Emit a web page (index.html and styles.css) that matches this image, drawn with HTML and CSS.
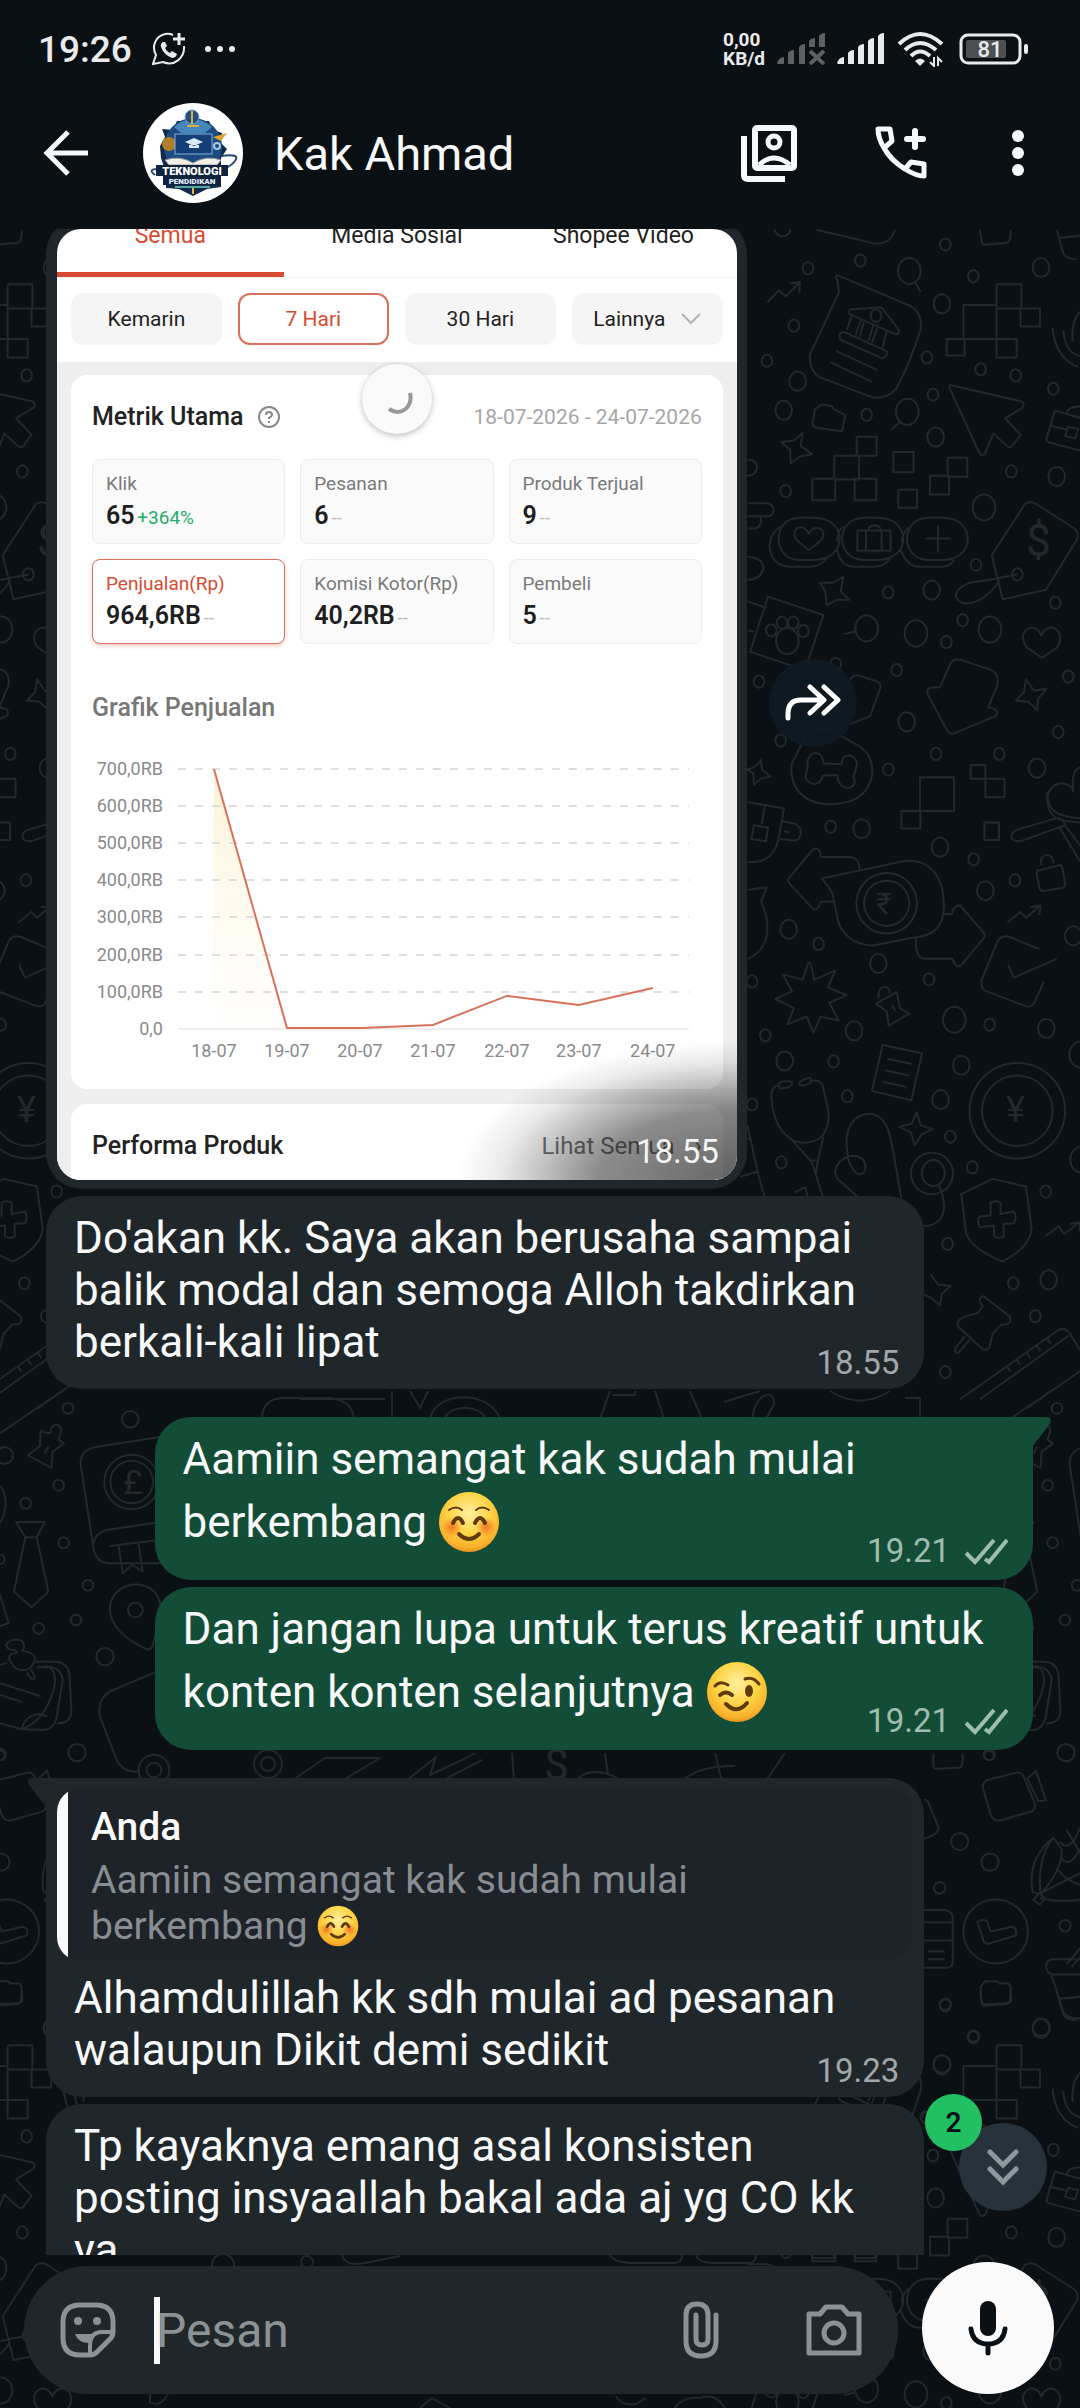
FILE: index.html
```html
<!DOCTYPE html>
<html lang="id">
<head>
    <meta charset="UTF-8">
    <meta name="viewport" content="width=device-width, initial-scale=1.0">
    <title>Kak Ahmad</title>
    <link rel="stylesheet" href="styles.css">
</head>
<body>

<!-- Shared shapes -->
<svg class="sprite" aria-hidden="true">
    <defs>
        <radialGradient id="face" cx="50%" cy="35%" r="68%">
            <stop offset="0" stop-color="#fff0a0"/>
            <stop offset="0.5" stop-color="#fdd545"/>
            <stop offset="0.85" stop-color="#f8b02a"/>
            <stop offset="1" stop-color="#e58a1c"/>
        </radialGradient>
        <radialGradient id="blush">
            <stop offset="0" stop-color="#f4641c" stop-opacity="0.85"/>
            <stop offset="1" stop-color="#f4641c" stop-opacity="0"/>
        </radialGradient>
    </defs>
    <symbol id="emoji-smile" viewBox="0 0 62 62">
        <circle cx="31" cy="31" r="30" fill="url(#face)"/>
        <circle cx="14" cy="36" r="10" fill="url(#blush)"/>
        <circle cx="48" cy="36" r="10" fill="url(#blush)"/>
        <g fill="none" stroke="#5f3a0c" stroke-linecap="round">
            <path d="M11 19Q18 14 24 19M38 19Q44 14 51 19" stroke-width="2"/>
            <path d="M15 32Q20 22 25 32M37 32Q42 22 47 32" stroke-width="4"/>
            <path d="M21 43Q31 53 41 43" stroke-width="4"/>
        </g>
    </symbol>
    <symbol id="emoji-wink" viewBox="0 0 62 62">
        <circle cx="31" cy="31" r="30" fill="url(#face)"/>
        <ellipse cx="43" cy="30" rx="4" ry="6" fill="#5f3a0c"/>
        <g fill="none" stroke="#5f3a0c" stroke-linecap="round">
            <path d="M9 25Q14 19 22 24M39 18Q47 15 53 23" stroke-width="3"/>
            <path d="M14 34Q20 29 26 34" stroke-width="4"/>
            <path d="M20 43Q31 54 41 42" stroke-width="4"/>
        </g>
    </symbol>
    <symbol id="ticks" viewBox="0 0 44 28">
        <path d="M2 16L11 25L30 3M21 22L25 25L43 3" fill="none" stroke="currentColor" stroke-width="4"/>
    </symbol>
</svg>

<div class="app">

    <!-- Wallpaper -->
    <svg class="wallpaper" aria-hidden="true">
        <g id="tile">
            <g transform="translate(740 230) scale(.3333 .3827)">
                <path d="M230 0Q310 15 400 35Q450 40 465 0M720 0L725 30Q727 40 740 38L800 34Q813 32 812 0M950 0L968 55Q975 78 1010 76M960 20L1030 14"/>
                <path d="M82 188L117 158L137 174L178 138M148 140L180 136L178 164M524 134L542 162M484 498L454 522M348 1048L312 1056"/>
                <path d="M292 118L510 198Q548 215 542 260Q510 350 468 415Q445 440 400 438L240 385Q205 365 210 325L296 165Q296 140 288 122Z"/>
                <path d="M330 208Q320 218 335 222L465 272Q480 274 476 260L425 202ZM300 270Q295 285 305 288L425 335Q440 336 442 318L312 266ZM335 225L320 262M362 235L347 275M372 240L358 280M400 250L385 290M412 255L396 294M440 264L426 312M288 316L412 366M272 346L395 396"/>
                <path d="M770 142H844V205H900V252H842V205M770 142V285H830V333H770V285M620 285H674V328H620ZM670 285V196H770V205H842M674 285H770"/>
                <path d="M630 405L845 448Q856 455 848 464L795 492L842 535L815 566Q808 570 800 564L760 532L735 585Q725 592 718 582L628 412Z"/>
                <path d="M225 468L245 456L275 460L282 468L316 484L306 526L225 516Q214 510 220 494ZM188 530L182 564L216 586L180 592L152 610L150 574L124 554L162 550Z"/>
                <path d="M350 540H410V590H350ZM283 590H357V652H283ZM217 650H286V706H217ZM344 650H409V706H344ZM460 580H521V633H460ZM475 679H531V726H475ZM623 595H682V645H623ZM570 642H627V691H570Z"/>
                <path d="M938 255Q945 335 1015 358M970 262Q975 320 1020 330M1060 195Q990 210 998 290M945 472L1060 500M945 472L920 545Q918 552 928 555L1080 590M935 512L980 522M985 514L1015 520L1005 545L975 538ZM980 480Q985 458 1030 462"/>
                <path d="M178 752H222C325 752 325 862 222 862H178C95 862 95 752 178 752M122 775C70 800 80 880 150 880H205Q245 880 262 855M372 752H414C515 752 515 862 414 862H372C285 862 285 752 372 752M312 775Q290 785 292 815M292 835Q300 880 345 880H400Q435 880 452 855M565 752H610C708 752 708 862 610 862H565C480 862 480 752 565 752M505 778Q485 795 486 815M482 835Q500 880 540 880H600Q630 880 642 862"/>
                <path d="M206 837L170 810C145 775 195 765 206 794C220 765 270 780 242 812ZM352 785H452V838H352ZM378 785V838M425 785V838M385 785Q385 772 404 772Q422 772 422 785M594 772V840M556 806H632"/>
                <path d="M22 714H80Q102 716 100 735Q98 748 80 748H22M22 780H45Q65 778 63 750M22 600Q50 600 52 620Q48 642 22 642M22 854Q72 858 70 884Q62 914 22 914"/>
                <path d="M855 716Q870 708 885 714L1000 778Q1020 790 1010 810L918 940L788 965L755 850ZM832 900C790 905 765 915 700 920C640 930 630 972 680 976C730 975 770 930 778 915"/>
                <path d="M310 906L302 944L328 966L290 966L260 980L256 944L240 922L278 922ZM84 958L250 1006L195 1150L30 1102ZM22 970L80 988M22 1046L42 1050"/>
                <path d="M22 1410Q60 1400 62 1384L66 1410L92 1428L62 1434L42 1450L40 1420ZM906 1118L860 1090C825 1050 885 1015 904 1060C925 1015 985 1050 950 1092ZM858 1174L882 1204L920 1198L894 1226L892 1254L864 1232L828 1230L852 1208Z"/>
                <path d="M600 1195L630 1135Q640 1118 665 1124L755 1150Q778 1160 772 1190L745 1248Q780 1250 768 1270L645 1314Q630 1320 622 1308L562 1212Q560 1196 575 1196Z"/>
                <path d="M330 1175Q340 1160 360 1165L412 1180Q425 1185 420 1200L390 1270L330 1292M205 1310L155 1395C145 1500 260 1510 320 1495C400 1480 425 1390 360 1350L270 1305Q235 1300 205 1310"/>
                <path d="M250 1394L305 1396C305 1360 355 1370 350 1400C345 1425 335 1425 345 1440C340 1470 290 1460 292 1424L248 1426C240 1460 190 1450 198 1420C200 1410 205 1410 202 1395C205 1355 250 1360 250 1394Z"/>
                <path d="M540 1430H642V1518H540ZM484 1518H541V1564H484ZM692 1398H736V1434H692ZM736 1434H794V1482H736ZM733 1548H777V1594H733ZM1000 1470C1000 1440 925 1430 922 1490C925 1540 960 1545 1020 1548M1030 1400Q990 1410 1000 1460"/>
                <circle class="ring-l" cx="508" cy="107"/><circle class="ring-l" cx="502" cy="475"/><circle class="ring-l" cx="732" cy="725"/><circle class="ring-l" cx="380" cy="1041"/><circle class="ring-l" cx="528" cy="1054"/><circle class="ring-l" cx="750" cy="1044"/><circle class="ring-l" cx="142" cy="1074"/>
                <circle class="ring-m" cx="606" cy="193"/><circle class="ring-m" cx="903" cy="98"/><circle class="ring-m" cx="173" cy="395"/><circle class="ring-m" cx="131" cy="471"/><circle class="ring-m" cx="587" cy="541"/><circle class="ring-m" cx="950" cy="644"/><circle class="ring-m" cx="575" cy="941"/><circle class="ring-m" cx="500" cy="1285"/><circle class="ring-m" cx="891" cy="1406"/><circle class="ring-m" cx="128" cy="-8"/>
                <circle class="ring-s" cx="616" cy="38"/><circle class="ring-s" cx="361" cy="80"/><circle class="ring-s" cx="204" cy="100"/><circle class="ring-s" cx="700" cy="121"/><circle class="ring-s" cx="162" cy="250"/><circle class="ring-s" cx="81" cy="342"/><circle class="ring-s" cx="561" cy="333"/><circle class="ring-s" cx="722" cy="364"/><circle class="ring-s" cx="827" cy="380"/><circle class="ring-s" cx="940" cy="415"/><circle class="ring-s" cx="579" cy="430"/><circle class="ring-s" cx="380" cy="483"/><circle class="ring-s" cx="814" cy="631"/><circle class="ring-s" cx="137" cy="682"/><circle class="ring-s" cx="708" cy="875"/><circle class="ring-s" cx="445" cy="947"/><circle class="ring-s" cx="946" cy="974"/><circle class="ring-s" cx="668" cy="1020"/><circle class="ring-s" cx="619" cy="1077"/><circle class="ring-s" cx="287" cy="1134"/><circle class="ring-s" cx="470" cy="1150"/><circle class="ring-s" cx="57" cy="1180"/><circle class="ring-s" cx="985" cy="1167"/><circle class="ring-s" cx="122" cy="1334"/><circle class="ring-s" cx="955" cy="1312"/><circle class="ring-s" cx="588" cy="1369"/><circle class="ring-s" cx="778" cy="1369"/><circle class="ring-s" cx="445" cy="1410"/><circle class="ring-s" cx="408" cy="224"/><circle class="ring-s" cx="832" cy="900"/>
                <circle class="ring-s" cx="94" cy="1046"/><circle class="ring-s" cx="126" cy="1026"/><circle class="ring-s" cx="160" cy="1026"/><circle class="ring-s" cx="190" cy="1048"/>
            </g>
            <g transform="translate(740 800) scale(.3333 .3827)">
                <path d="M22 5L132 22L118 90Q105 162 40 162H22M75 14L65 62M42 66L84 72L78 108L34 102ZM126 55L165 62C192 75 185 108 160 106L116 102M132 82L150 84"/>
                <path d="M358 182Q360 150 325 149H242L240 135Q230 122 218 130L146 205Q142 212 148 218L218 284Q235 292 242 266H280M245 205L490 160C570 150 612 200 612 280C610 330 580 355 530 358L400 380C340 380 300 350 290 300L278 245Q265 225 245 205M612 298H636Q640 275 660 275L734 350Q736 358 728 364L665 430Q650 445 638 415H560Q530 415 528 380V358"/>
                <path d="M22 235L80 228L64 265C95 330 90 390 22 416M206 424Q214 422 222 470L286 446L264 490L320 510L268 530L296 576L242 566L220 608L200 566L142 586L162 544L106 520L156 500L128 455L188 470Z"/>
                <path d="M815 92Q810 108 840 108L975 66Q970 42 940 50L830 78Q818 82 815 92M920 -20C925 30 950 45 1030 48M960 74L1020 160M975 66L1030 130M905 170L902 160C910 135 940 140 940 166M892 185L960 170Q966 170 968 180L975 218Q975 228 965 230L910 238Q900 238 898 228L890 195ZM802 320L842 292L858 308L900 276M870 280L902 276L898 300"/>
                <path d="M898 390L810 358Q780 350 770 375L725 470Q720 490 735 498L855 538Q880 545 888 520L912 475M804 430L822 464L950 415M415 518C415 475 450 485 450 505M408 532L470 502L480 544L508 558L446 590L440 552ZM456 535L466 552"/>
                <path d="M428 640L546 662L514 785L396 760ZM442 676L514 690M434 706L508 720M428 736L500 750"/>
                <path d="M115 744Q120 732 155 736Q162 752 120 754ZM178 744Q175 732 210 726Q225 740 190 746ZM118 744Q90 750 95 780Q100 860 160 890Q205 905 245 880Q275 845 262 800L248 745Q240 730 215 734M155 888L215 945L250 1040M250 880L232 950L228 975M208 942H236M355 1038L292 990Q275 970 300 945C330 920 380 925 376 965C360 1000 325 960 322 920C310 860 340 820 390 820C445 825 450 880 460 920L484 1040M595 1005C630 1070 610 1110 552 1114"/>
                <path d="M530 816L542 850L578 860L545 874L525 902L512 868L478 854L515 846ZM758 990L858 1010L875 1120Q870 1170 786 1206Q690 1170 678 1130L664 1030ZM752 1052Q770 1045 782 1052V1082L822 1075Q832 1090 822 1106L790 1108L792 1140Q775 1148 762 1140V1112L720 1116Q708 1100 720 1088L752 1086Z"/>
                <path d="M916 1140L956 1114L972 1134L1018 1104M990 1108L1020 1104L1018 1126M22 850L55 980L75 1040M0 985L55 970M22 885H35M165 1025L195 1012L205 1040M572 1240L594 1266L632 1270L606 1290L600 1320L572 1300L552 1292"/>
                <path d="M730 1296L810 1350Q815 1375 785 1370L758 1395L748 1432Q735 1442 722 1430L656 1378Q645 1360 675 1350L715 1340L728 1322Q710 1305 730 1296M690 1410L655 1445Q640 1445 648 1430L675 1400M660 1566L955 1385Q975 1375 990 1395L1080 1520M720 1566L985 1400M860 1590L1040 1480M800 1480L812 1494M830 1462L842 1476M860 1444L872 1458M890 1426L902 1440M920 1406L932 1420"/>
                <ellipse cx="440" cy="270" rx="91" ry="79"/><ellipse cx="440" cy="270" rx="68" ry="59"/><ellipse cx="832" cy="812" rx="143" ry="125"/><ellipse cx="832" cy="812" rx="106" ry="92"/><ellipse cx="576" cy="976" rx="63" ry="54"/>
                <circle class="ring-l" cx="643" cy="574"/><circle class="ring-l" cx="580" cy="975"/><circle class="ring-l" cx="1022" cy="665"/><circle class="ring-l" cx="1025" cy="940"/>
                <circle class="ring-m" cx="365" cy="75"/><circle class="ring-m" cx="600" cy="123"/><circle class="ring-m" cx="736" cy="237"/><circle class="ring-m" cx="146" cy="338"/><circle class="ring-m" cx="415" cy="427"/><circle class="ring-m" cx="342" cy="603"/><circle class="ring-m" cx="134" cy="682"/><circle class="ring-m" cx="664" cy="693"/><circle class="ring-m" cx="602" cy="783"/><circle class="ring-m" cx="919" cy="597"/><circle class="ring-m" cx="1000" cy="355"/><circle class="ring-m" cx="926" cy="1254"/>
                <circle class="ring-s" cx="272" cy="70"/><circle class="ring-s" cx="701" cy="155"/><circle class="ring-s" cx="825" cy="210"/><circle class="ring-s" cx="236" cy="376"/><circle class="ring-s" cx="567" cy="469"/><circle class="ring-s" cx="36" cy="474"/><circle class="ring-s" cx="76" cy="615"/><circle class="ring-s" cx="749" cy="587"/><circle class="ring-s" cx="281" cy="683"/><circle class="ring-s" cx="322" cy="774"/><circle class="ring-s" cx="36" cy="796"/><circle class="ring-s" cx="631" cy="880"/><circle class="ring-s" cx="124" cy="947"/><circle class="ring-s" cx="697" cy="960"/><circle class="ring-s" cx="917" cy="1023"/><circle class="ring-s" cx="623" cy="1160"/><circle class="ring-s" cx="820" cy="1263"/><circle class="ring-s" cx="886" cy="1349"/><circle class="ring-s" cx="616" cy="1495"/>
            </g>
            <g transform="translate(920 1390) scale(.3333 .4783)">
                <path d="M40 760V785Q42 794 52 792L118 790Q130 788 128 760M190 835Q185 820 205 815L290 800Q305 798 312 810L345 865Q348 878 330 882L240 900Q220 902 212 888ZM322 812L348 796L378 858L355 860Z"/>
                <path d="M12 856Q22 855 28 868L56 915Q55 930 12 938M12 1087H75Q98 1090 98 1105V1195Q98 1208 80 1208H12M12 1113H98M12 1151H98M24 1174H74M24 1190H74M400 936Q320 980 338 1050L362 1054Q430 1000 425 960ZM362 1054Q350 980 400 936M370 1050Q420 1030 480 1010M340 1066L358 1052L375 1062L360 1076ZM410 1000Q450 1040 540 1040M360 1062Q430 1075 540 1060M420 945Q450 970 480 915M440 920L500 990M425 980Q450 1000 480 960"/>
                <path d="M172 1112Q185 1105 200 1110L212 1132L275 1122Q292 1124 288 1140L205 1158Q190 1158 188 1145ZM182 1248L195 1236H232L236 1241H265Q272 1244 272 1252L274 1275Q272 1282 262 1282L195 1284Q184 1284 184 1276ZM378 1205Q380 1190 400 1190H500M378 1205Q380 1220 400 1222H500M395 1224L430 1300Q440 1315 480 1314M420 1272L500 1268M440 1200L490 1160M455 1206L510 1165"/>
                <ellipse cx="227" cy="1132" rx="97" ry="67"/>
                <ellipse cx="119" cy="944" rx="26" ry="18"/><ellipse cx="210" cy="987" rx="26" ry="18"/><ellipse cx="364" cy="1332" rx="26" ry="18"/><ellipse cx="66" cy="1409" rx="26" ry="18"/>
                <ellipse cx="59" cy="1041" rx="17" ry="12"/><ellipse cx="435" cy="1120" rx="17" ry="12"/><ellipse cx="76" cy="1284" rx="17" ry="12"/><ellipse cx="161" cy="1351" rx="17" ry="12"/><ellipse cx="208" cy="762" rx="17" ry="12"/><ellipse cx="18" cy="1520" rx="17" ry="12"/>
            </g>
            <g transform="translate(989 1380) scale(.3333)">
                <path d="M0 160L190 30M122 152Q135 162 152 158C150 130 185 125 184 155L175 178L192 190L158 215L154 264L84 226L120 198ZM146 200L134 220M48 426H134L110 472H76ZM76 472L42 635L95 682L145 635L110 472M0 318Q20 340 16 385Q12 410 0 430M0 645L26 730L0 738"/>
                <path d="M520 165L290 200Q238 210 242 255L280 500Q285 550 330 550H520M520 420L335 448Q290 452 280 490M520 475L328 498M356 496L368 580L396 555L428 574L416 492M440 808Q455 812 460 790L482 690C485 590 340 590 330 680C325 740 380 780 440 808M470 875L340 930Q290 950 300 1010L350 1140Q370 1180 420 1174M0 910L120 948M0 945L66 966M0 1030L65 1048Q120 1030 150 960Q180 890 150 862L110 862M20 848L0 855M65 1048Q75 1005 120 1002L140 1008M70 1048L130 1050Q165 1050 172 1000L188 900Q185 860 130 858M172 1030Q215 1030 214 990L208 880Q200 845 165 845H105M35 850Q20 830 35 822L52 818L44 810C0 810 20 770 60 780C80 790 70 810 66 812L80 815Q115 825 100 850C90 875 50 880 35 850ZM80 878L95 898Q108 898 102 885L92 868"/>
                <circle cx="395" cy="306" r="82"/><circle cx="395" cy="306" r="64"/><circle cx="406" cy="690" r="22"/><circle cx="462" cy="1170" r="46"/><circle cx="462" cy="1170" r="22"/>
                <circle cx="391" cy="118" r="25"/><circle cx="14" cy="227" r="25"/><circle cx="315" cy="830" r="26"/><circle cx="231" cy="1118" r="26"/>
                <circle cx="204" cy="85" r="16"/><circle cx="176" cy="316" r="16"/><circle cx="77" cy="370" r="16"/><circle cx="191" cy="488" r="16"/><circle cx="264" cy="616" r="16"/><circle cx="228" cy="720" r="16"/><circle cx="116" cy="745" r="16"/><circle cx="0" cy="538" r="14"/><circle cx="0" cy="1126" r="14"/>
            </g>
            <text x="1026" y="556" font-size="44">$</text>
            <text x="876" y="914" font-size="30">₹</text>
            <text x="1006" y="1122" font-size="36">¥</text>
            <text x="1112" y="1494" font-size="34">£</text>
        </g>
        <use href="#tile" x="-989"/>
        <use href="#tile" y="1761"/>
        <use href="#tile" x="-989" y="1761"/>
        <!-- pieces that show in the gaps between bubbles -->
        <path d="M262 1419Q262 1398 285 1398H330Q352 1400 354 1419M300 1399H385M392 1391V1419M410 1391L420 1408L428 1391M430 1419C436 1390 490 1390 500 1419M444 1419C450 1404 480 1404 486 1419M610 1391L600 1419M612 1395H635V1391M655 1391L664 1419M690 1391L702 1419M724 1402L760 1391M752 1419C756 1390 776 1390 774 1404L766 1419M830 1391Q860 1410 890 1391M905 1398H920V1419"/>
        <path d="M290 1782L325 1758H380L340 1782M405 1782L436 1757L430 1775L468 1757L475 1753M440 1782L482 1760M512 1753L514 1782M575 1782Q590 1762 625 1782M605 1753L608 1775M680 1782Q700 1765 735 1766M765 1782L785 1753M715 1753L722 1782"/>
        <text x="544" y="1780" font-size="44">$</text>
        <path d="M122 2255Q124 2252 140 2250M212 2266C212 2250 234 2250 234 2266M342 2255Q345 2268 370 2262L400 2256M610 2255Q615 2264 640 2263H675Q682 2262 682 2255M696 2255Q698 2263 715 2263H750Q756 2262 756 2255M812 2248V2258H834V2248M855 2248V2258H875V2248M150 2394V2402Q160 2408 168 2394M420 2408L432 2398L450 2408M616 2396Q620 2406 636 2404L646 2398M675 2408Q682 2396 700 2398Q715 2392 725 2408"/>
        <circle cx="268" cy="1764" r="14"/><circle cx="268" cy="1764" r="7"/><circle cx="307" cy="2262" r="6"/>
    </svg>

    <header class="header">
        <div class="status-bar">
            <span class="clock">19:26</span>
            <svg width="34" height="34" viewBox="0 0 34 34" fill="none" stroke="currentColor" stroke-width="2">
                <path d="M21 3Q17 1 13 2C4 4 -1 14 4 23L1 32L11 30C22 35 33 26 32 14"/>
                <path d="M27 1V13M21 7H33" stroke-width="3"/>
                <path d="M11 10Q8 12 9 15Q12 23 20 26Q24 26 25 22L20 19L18 21Q14 19 13 16L15 14L13 10Z" fill="currentColor" stroke="none"/>
            </svg>
            <svg width="32" height="8" viewBox="0 0 32 8" fill="currentColor"><circle cx="4" cy="4" r="3"/><circle cx="16" cy="4" r="3"/><circle cx="28" cy="4" r="3"/></svg>
            <span class="net-speed">0,00<br>KB/d</span>
            <svg class="signal-off" width="48" height="32" viewBox="0 0 48 32" fill="currentColor">
                <path d="M0 30Q2 24 7 24V31H1ZM11 20Q13 17 17 17V31H11ZM22 14Q24 11 28 11V31H22ZM32 8Q34 5 38 5V14H32ZM42 3Q44 0 48 0V14H42Z"/>
                <path d="M33 18L47 31M47 18L33 31" stroke="currentColor" stroke-width="4"/>
            </svg>
            <svg width="48" height="32" viewBox="0 0 48 32" fill="currentColor">
                <path d="M0 30Q2 24 7 24V31H1ZM11 20Q13 17 17 17V31H11ZM21 14Q23 11 27 11V31H21ZM31 8Q33 5 37 5V31H31ZM41 3Q43 0 47 0V31H41Z"/>
            </svg>
            <svg width="48" height="36" viewBox="0 0 48 36" fill="none" stroke="currentColor" stroke-width="4">
                <path d="M2 13Q23 -7 45 13M8 19Q23 5 39 19M14 25Q23 16 33 25"/>
                <path d="M18 30Q23 25 28 30L23 35Z" fill="currentColor" stroke="none"/>
                <path d="M37 26V35L33 31M41 35V27L45 31" stroke-width="2"/>
            </svg>
            <svg class="battery" width="70" height="32" viewBox="0 0 70 32">
                <rect x="2" y="2" width="59" height="28" rx="7" fill="none" stroke="currentColor" stroke-width="3"/>
                <rect x="7" y="7" width="40" height="18" rx="2" fill="#4c5053"/>
                <rect x="65" y="11" width="4" height="10" rx="2" fill="currentColor"/>
                <text x="31" y="24" text-anchor="middle" font-size="22" font-weight="500" fill="currentColor">81</text>
            </svg>
        </div>

        <div class="app-bar">
            <button class="icon-button" type="button" aria-label="Kembali">
                <svg width="46" height="46" viewBox="0 0 46 46" fill="none" stroke="currentColor" stroke-width="5"><path d="M45 23H5M25 2L4 23L25 44"/></svg>
            </button>
            <svg class="avatar" viewBox="0 0 100 100" role="img" aria-label="Teknologi Pendidikan">
                <circle cx="50" cy="50" r="50" fill="#fff"/>
                <path d="M17 43L22 34L19 26L30 27L34 18H66L70 27L79 30L78 40L84 46L78 55V84L64 86L50 93L36 86L23 85V70L18 55Z" fill="#13294a"/>
                <circle cx="50" cy="44" r="29" fill="#1d4a80"/>
                <circle cx="26" cy="41" r="7" fill="#b1802b"/>
                <path d="M31 24Q50 8 69 24L62 30H38Z" fill="#4586bb"/>
                <circle cx="49" cy="14" r="7" fill="#214c7e" stroke="#7da7c9"/>
                <path d="M49 8V21M44 23H56" stroke="#d7b24c" stroke-width="2"/>
                <rect x="32" y="31" width="37" height="20" fill="#163f78" stroke="#81b1dd"/>
                <path d="M42 39L51 35L60 39L51 43ZM46 42V45H56V42" fill="#d9ebf8"/>
                <path d="M70 34L84 30L78 38Z" fill="#d9a62e"/>
                <circle cx="74" cy="43" r="3" fill="none" stroke="#a9c9e4" stroke-width="2"/>
                <path d="M22 57Q37 52 50 60Q63 52 78 57L74 62H26Z" fill="#f1efe6" stroke="#8c98a5"/>
                <path d="M78 53Q98 50 92 58Q86 66 72 68M15 66Q4 66 12 72" fill="none" stroke="#27477a" stroke-width="2"/>
                <path d="M13 62H85V73H78V82H20V73H13Z" fill="#10233f"/>
                <text x="49" y="72" text-anchor="middle" font-size="11" font-weight="900" fill="#fff">TEKNOLOGI</text>
                <text x="49" y="81" text-anchor="middle" font-size="8" font-weight="900" fill="#e3edf8">PENDIDIKAN</text>
                <path d="M32 84H67" stroke="#58a6a0" stroke-width="2"/>
                <path d="M50 85V91" stroke="#dcb64b" stroke-width="2"/>
            </svg>
            <h1 class="contact-name">Kak Ahmad</h1>
            <button class="icon-button gallery" type="button" aria-label="Media">
                <svg width="56" height="58" viewBox="0 0 56 58" fill="none" stroke="currentColor" stroke-width="6">
                    <path d="M3 12V51Q3 55 7 55H44"/>
                    <rect x="14" y="4" width="39" height="40" rx="2"/>
                    <circle cx="33" cy="18" r="6" stroke-width="5"/>
                    <path d="M18 41Q33 27 49 41" stroke-width="5"/>
                </svg>
            </button>
            <button class="icon-button call" type="button" aria-label="Panggil">
                <svg width="54" height="54" viewBox="0 0 54 54" fill="none" stroke="currentColor" stroke-width="5" stroke-linejoin="round">
                    <path d="M4 3H16L18 15L10 22Q18 35 31 43L37 36L50 38V50Q42 50 31 43Q16 34 10 22Q4 12 4 3Z"/>
                    <path d="M41 5V21M33 13H49" stroke-width="6" stroke-linecap="round"/>
                </svg>
            </button>
            <button class="icon-button more" type="button" aria-label="Menu">
                <svg width="12" height="46" viewBox="0 0 12 46" fill="currentColor"><circle cx="6" cy="6" r="6"/><circle cx="6" cy="23" r="6"/><circle cx="6" cy="40" r="6"/></svg>
            </button>
        </div>
    </header>

    <main class="chat">
        <div class="messages">

            <div class="photo-row">
                <div class="bubble bubble-photo">
                    <div class="photo">
                        <div class="tabs">
                            <span class="tab active">Semua</span>
                            <span class="tab">Media Sosial</span>
                            <span class="tab">Shopee Video</span>
                        </div>
                        <div class="chips">
                            <button class="chip" type="button">Kemarin</button>
                            <button class="chip active" type="button">7 Hari</button>
                            <button class="chip" type="button">30 Hari</button>
                            <button class="chip" type="button">Lainnya
                                <svg width="20" height="12" viewBox="0 0 20 12" fill="none" stroke="#b5b5b5" stroke-width="2"><path d="M1 1L10 10L19 1"/></svg>
                            </button>
                        </div>
                        <div class="report">
                            <div class="spinner">
                                <svg width="32" height="32" viewBox="0 0 32 32" fill="none" stroke="#999" stroke-width="4"><path d="M29 10C32 24 20 34 8 26"/></svg>
                            </div>
                            <section class="card">
                                <div class="card-head">
                                    <h2>Metrik Utama</h2>
                                    <svg width="22" height="22" viewBox="0 0 22 22" fill="none" stroke="#888" stroke-width="2"><circle cx="11" cy="11" r="10"/><path d="M8 9Q8 6 11 6Q14 6 14 9Q14 10 11 12V13M11 15V17"/></svg>
                                    <span class="range">18-07-2026 - 24-07-2026</span>
                                </div>
                                <div class="stats">
                                    <div class="stat"><span>Klik</span><p><b>65</b> <i class="up">+364%</i></p></div>
                                    <div class="stat"><span>Pesanan</span><p><b>6</b> <i>--</i></p></div>
                                    <div class="stat"><span>Produk Terjual</span><p><b>9</b> <i>--</i></p></div>
                                    <div class="stat active"><span>Penjualan(Rp)</span><p><b>964,6RB</b> <i>--</i></p></div>
                                    <div class="stat"><span>Komisi Kotor(Rp)</span><p><b>40,2RB</b> <i>--</i></p></div>
                                    <div class="stat"><span>Pembeli</span><p><b>5</b> <i>--</i></p></div>
                                </div>
                                <h3>Grafik Penjualan</h3>
                                <svg class="chart" viewBox="0 0 610 310">
                                    <defs>
                                        <linearGradient id="area" x1="0" y1="0" x2="0" y2="1">
                                            <stop offset="0" stop-color="#fdf2d4"/>
                                            <stop offset="1" stop-color="#fffdf8" stop-opacity="0.3"/>
                                        </linearGradient>
                                    </defs>
                                    <path d="M122 10L195 269H122Z" fill="url(#area)"/>
                                    <path class="grid-line" d="M86 10H597M86 47H597M86 84H597M86 121H597M86 158H597M86 196H597M86 233H597"/>
                                    <path d="M86 270H597" stroke="#eee" stroke-width="2"/>
                                    <path d="M122 10L195 269H270L341 266L415 237L487 246L561 229" fill="none" stroke="#d9705a" stroke-width="2"/>
                                    <g text-anchor="end">
                                        <text x="71" y="16">700,0RB</text><text x="71" y="53">600,0RB</text><text x="71" y="90">500,0RB</text><text x="71" y="127">400,0RB</text>
                                        <text x="71" y="164">300,0RB</text><text x="71" y="202">200,0RB</text><text x="71" y="239">100,0RB</text><text x="71" y="276">0,0</text>
                                    </g>
                                    <g text-anchor="middle">
                                        <text x="122" y="298">18-07</text><text x="195" y="298">19-07</text><text x="268" y="298">20-07</text><text x="341" y="298">21-07</text>
                                        <text x="415" y="298">22-07</text><text x="487" y="298">23-07</text><text x="561" y="298">24-07</text>
                                    </g>
                                </svg>
                            </section>
                            <section class="card card-products">
                                <h2>Performa Produk</h2>
                                <span class="see-all">Lihat Semua <span>›</span></span>
                            </section>
                        </div>
                        <time class="photo-time">18.55</time>
                    </div>
                </div>
                <button class="forward" type="button" aria-label="Teruskan">
                    <svg width="56" height="40" viewBox="0 0 56 40" fill="none" stroke="currentColor" stroke-width="5" stroke-linecap="round" stroke-linejoin="round"><path d="M3 35V31Q3 17 16 17H38M25 4L39 17L25 30M39 4L53 17L39 30"/></svg>
                </button>
            </div>

            <div class="bubble">
                <p class="text">Do'akan kk. Saya akan berusaha sampai<br>balik modal dan semoga Alloh takdirkan<br>berkali-kali lipat</p>
                <time class="time">18.55</time>
            </div>

            <div class="bubble out tail">
                <p class="text">Aamiin semangat kak sudah mulai<br>berkembang <svg class="emoji" role="img" aria-label="tersenyum"><use href="#emoji-smile"/></svg></p>
                <time class="time">19.21 <svg class="ticks"><use href="#ticks"/></svg></time>
            </div>

            <div class="bubble out">
                <p class="text">Dan jangan lupa untuk terus kreatif untuk<br>konten konten selanjutnya <svg class="emoji" role="img" aria-label="mengedip"><use href="#emoji-wink"/></svg></p>
                <time class="time">19.21 <svg class="ticks"><use href="#ticks"/></svg></time>
            </div>

            <div class="bubble tail">
                <blockquote class="quote">
                    <cite>Anda</cite>
                    <p>Aamiin semangat kak sudah mulai<br>berkembang <svg class="emoji" role="img" aria-label="tersenyum"><use href="#emoji-smile"/></svg></p>
                </blockquote>
                <p class="text">Alhamdulillah kk sdh mulai ad pesanan<br>walaupun Dikit demi sedikit</p>
                <time class="time">19.23</time>
            </div>

            <div class="bubble">
                <p class="text">Tp kayaknya emang asal konsisten<br>posting insyaallah bakal ada aj yg CO kk<br>ya</p>
            </div>
        </div>

        <button class="scroll-down" type="button" aria-label="Ke pesan terbaru">
            <svg width="32" height="38" viewBox="0 0 32 38" fill="none" stroke="currentColor" stroke-width="5" stroke-linecap="round"><path d="M3 4L16 17L29 4M3 21L16 34L29 21"/></svg>
            <span class="unread">2</span>
        </button>
    </main>

    <footer class="composer">
        <div class="composer-box">
            <button class="icon-button" type="button" aria-label="Stiker">
                <svg width="56" height="56" viewBox="0 0 56 56" fill="none" stroke="currentColor" stroke-width="5">
                    <path d="M20 3H36Q53 3 53 20V30Q53 34 50 37L37 50Q34 53 30 53H20Q3 53 3 36V20Q3 3 20 3Z"/>
                    <path d="M30 53V44Q30 30 42 30H53" stroke-width="4"/>
                    <path d="M15 32H37Q30 34 29 41Q18 41 15 32Z" fill="currentColor" stroke="none"/>
                    <circle cx="18" cy="19" r="4" fill="currentColor" stroke="none"/><circle cx="37" cy="19" r="4" fill="currentColor" stroke="none"/>
                </svg>
            </button>
            <label class="field">
                <span class="caret"></span>
                <input type="text" placeholder="Pesan" aria-label="Pesan">
            </label>
            <button class="icon-button" type="button" aria-label="Lampirkan">
                <svg width="36" height="58" viewBox="0 0 36 58" fill="none" stroke="currentColor" stroke-width="5" stroke-linecap="round"><path d="M33 14V40Q33 55 18 55Q3 55 3 40V14Q3 3 14 3Q25 3 25 14V38Q25 44 19 44Q13 44 13 38V14"/></svg>
            </button>
            <button class="icon-button camera" type="button" aria-label="Kamera">
                <svg width="56" height="52" viewBox="0 0 56 52" fill="none" stroke="currentColor" stroke-width="5" stroke-linejoin="round"><path d="M3 10H14L20 3H36L42 10H53V49H3Z"/><circle cx="28" cy="29" r="10"/></svg>
            </button>
        </div>
        <button class="mic" type="button" aria-label="Pesan suara">
            <svg width="40" height="56" viewBox="0 0 40 56" fill="none" stroke="currentColor" stroke-width="5" stroke-linecap="round"><rect x="12" y="1" width="16" height="35" rx="8" fill="currentColor" stroke="none"/><path d="M3 29Q5 44 20 44Q35 44 37 29M20 44V53"/></svg>
        </button>
    </footer>
</div>

</body>
</html>
```
FILE: styles.css
```css
* {
    box-sizing: border-box;
}

body {
    margin: 0;
    font-family: Roboto, "Noto Sans", sans-serif;
    background-color: #0b1014;
    color: #f7f8fa;
}

h1, h2, h3, p, blockquote {
    margin: 0;
}

button {
    border: 0;
    padding: 0;
    background: none;
    font-family: inherit;
    color: inherit;
}

svg {
    flex-shrink: 0;
}

.sprite {
    position: absolute;
    width: 0;
    height: 0;
}

.app {
    position: relative;
    display: flex;
    flex-direction: column;
    height: 100vh;
    overflow: hidden;
}

/* Wallpaper */
.wallpaper {
    position: absolute;
    top: 0;
    left: 0;
    width: 100%;
    height: 100%;
    fill: none;
    stroke: #22282c;
    stroke-width: 2;
    stroke-linejoin: round;
}

.wallpaper path,
.wallpaper circle,
.wallpaper ellipse {
    vector-effect: non-scaling-stroke;
}

.wallpaper text {
    fill: #22282c;
    stroke: none;
}

.ring-l { r: 34px; }
.ring-m { r: 25px; }
.ring-s { r: 16px; }

/* Header */
.header {
    position: relative;
    z-index: 2;
    background-color: #0b1014;
}

.status-bar {
    display: flex;
    align-items: center;
    gap: 12px;
    height: 98px;
    padding: 0 51px 0 38px;
    color: #e8eaec;
}

.clock {
    font-size: 37px;
    font-weight: 500;
    margin-right: 8px;
}

.status-bar .clock + svg {
    margin-right: 6px;
}

.net-speed {
    margin-left: auto;
    font-size: 19px;
    font-weight: 700;
    line-height: 19px;
}

.signal-off {
    color: #5d6163;
}

.battery {
    margin-left: 2px;
}

.app-bar {
    display: flex;
    align-items: center;
    height: 131px;
    padding: 0 56px 21px 43px;
}

.icon-button {
    display: flex;
    align-items: center;
    justify-content: center;
}

.avatar {
    width: 100px;
    height: 100px;
    margin-left: 54px;
}

.contact-name {
    flex: 1;
    margin-left: 31px;
    font-size: 47px;
    font-weight: 400;
}

.call {
    margin: 0 84px 0 77px;
}

/* Messages */
.chat {
    position: relative;
    flex: 1;
    min-height: 0;
    overflow: hidden;
}

.messages {
    display: flex;
    flex-direction: column;
    gap: 7px;
    margin-top: -11px;
    padding: 0 47px 0 46px;
}

.bubble {
    position: relative;
    display: grid;
    width: 89%;
    padding: 16px 25px 6px 28px;
    border-radius: 36px;
    background-color: #1f272a;
}

.bubble.out {
    align-self: flex-end;
    padding: 16px 25px 9px 28px;
    background-color: #144d37;
}

.bubble.tail {
    margin-top: 21px;
    border-top-left-radius: 0;
}

.bubble.out.tail {
    border-top-left-radius: 36px;
    border-top-right-radius: 0;
}

.bubble.tail::before {
    content: "";
    position: absolute;
    top: 0;
    left: -19px;
    width: 20px;
    height: 30px;
    background-color: inherit;
    clip-path: path("M20 0H6Q-1 0 2 7L20 30Z");
}

.bubble.out.tail::before {
    left: auto;
    right: -19px;
    clip-path: path("M0 0H14Q21 0 18 7L0 30Z");
}

.text {
    grid-area: 2 / 1;
    padding-bottom: 15px;
    font-size: 44px;
    line-height: 52px;
}

.out .text {
    padding-bottom: 18px;
}

.time {
    grid-area: 2 / 1;
    align-self: end;
    justify-self: end;
    display: flex;
    align-items: center;
    gap: 14px;
    font-size: 33px;
    line-height: 40px;
    color: #a1a7aa;
}

.out .time {
    color: #9fbcaf;
}

.ticks {
    width: 44px;
    height: 28px;
}

.emoji {
    width: 62px;
    height: 62px;
    margin-top: 6px;
    vertical-align: -16px;
}

.quote {
    grid-area: 1 / 1;
    margin: -6px -14px 11px -17px;
    padding: 16px 22px 12px 34px;
    border-radius: 24px;
    background: linear-gradient(to right, #fafafa 11px, #1d2328 11px);
    font-size: 39px;
    line-height: 46px;
    color: #878d92;
}

.quote cite {
    display: block;
    margin-bottom: 7px;
    font-style: normal;
    font-weight: 500;
    color: #fafafa;
}

.quote .emoji {
    width: 42px;
    height: 42px;
    margin-top: 0;
    vertical-align: -8px;
}

/* Photo message */
.photo-row {
    display: flex;
    align-items: center;
    gap: 22px;
}

.bubble.bubble-photo {
    width: 71%;
    padding: 11px 10px 9px 11px;
}

.photo {
    position: relative;
    overflow: hidden;
    border-radius: 24px;
    background-color: #fff;
    color: #222;
    font-size: 20px;
}

.photo::after {
    content: "";
    position: absolute;
    right: 0;
    bottom: 0;
    width: 280px;
    height: 140px;
    background: radial-gradient(ellipse farthest-side at 100% 100%, rgba(0, 0, 0, 0.6), rgba(0, 0, 0, 0.45) 50%, rgba(0, 0, 0, 0.08) 85%, rgba(0, 0, 0, 0));
}

.photo-time {
    position: absolute;
    z-index: 1;
    right: 18px;
    bottom: 8px;
    font-size: 33px;
    line-height: 40px;
    color: #f4f4f4;
}

.tabs {
    display: flex;
    height: 49px;
    border-bottom: 1px solid #f4f4f4;
}

.tab {
    flex: 1;
    display: flex;
    flex-direction: column;
    justify-content: flex-end;
    padding-bottom: 29px;
    font-size: 23px;
    line-height: 24px;
    text-align: center;
}

.tab.active {
    padding-bottom: 24px;
    border-bottom: 5px solid #d64b32;
    color: #d64b32;
}

.chips {
    display: grid;
    grid-template-columns: repeat(4, 1fr);
    gap: 16px;
    padding: 15px 14px 17px;
}

.chip {
    display: flex;
    align-items: center;
    justify-content: center;
    gap: 16px;
    height: 52px;
    border-radius: 12px;
    background-color: #f5f5f5;
    font-size: 21px;
}

.chip.active {
    border: 2px solid #d9705a;
    background-color: #fff;
    color: #d64b32;
}

.report {
    position: relative;
    padding: 13px 14px 0;
    background-color: #eeeeee;
}

.spinner {
    position: absolute;
    top: 2px;
    left: calc(50% - 35px);
    display: flex;
    align-items: center;
    justify-content: center;
    width: 70px;
    height: 70px;
    border-radius: 50%;
    background-color: #fafafa;
    box-shadow: 0 2px 6px rgba(0, 0, 0, 0.25);
}

.card {
    padding: 26px 21px 20px;
    border-radius: 16px;
    background-color: #fff;
}

.card-head {
    display: flex;
    align-items: center;
    gap: 15px;
    height: 32px;
}

.card h2,
.card h3 {
    font-size: 25px;
    line-height: 32px;
    font-weight: 500;
}

.range {
    margin-left: auto;
    font-size: 21px;
    color: #a6a6a6;
}

.stats {
    display: grid;
    grid-template-columns: repeat(3, 1fr);
    gap: 15px;
    margin-top: 26px;
}

.stat {
    height: 85px;
    padding: 12px 13px;
    border: 1px solid #ededed;
    border-radius: 8px;
    background-color: #fafafa;
    font-size: 19px;
    line-height: 24px;
    color: #7a7a7a;
}

.stat p {
    margin-top: 6px;
    line-height: 28px;
}

.stat b {
    font-size: 25px;
    font-weight: 600;
    color: #1f1f1f;
}

.stat i {
    margin-left: -2px;
    font-style: normal;
    color: #bdbdbd;
}

.stat .up {
    color: #22ad6c;
}

.stat.active {
    border-color: #d9705a;
    background-color: #fff;
    box-shadow: 0 2px 4px rgba(214, 75, 50, 0.3);
    color: #d64b32;
}

.card h3 {
    margin: 48px 0 35px;
    color: #777;
}

.chart {
    display: block;
    width: 100%;
    font-size: 18px;
}

.chart text {
    fill: #8a8a8a;
}

.grid-line {
    fill: none;
    stroke: #dedede;
    stroke-width: 2;
    stroke-dasharray: 8 9;
}

.card-products {
    display: flex;
    justify-content: space-between;
    margin-top: 15px;
    padding: 26px 21px 18px;
    border-radius: 16px 16px 0 0;
    font-size: 24px;
    line-height: 32px;
    color: #777;
}

.card-products h2 {
    color: #222;
}

.see-all {
    display: flex;
    gap: 20px;
}

.forward {
    display: flex;
    align-items: center;
    justify-content: center;
    width: 88px;
    height: 88px;
    border-radius: 50%;
    background-color: rgba(16, 27, 34, 0.9);
    color: #fff;
}

/* Jump to latest */
.scroll-down {
    position: absolute;
    right: 33px;
    bottom: 44px;
    display: flex;
    align-items: center;
    justify-content: center;
    width: 88px;
    height: 88px;
    border-radius: 50%;
    background-color: #27323a;
    color: #90979b;
}

.unread {
    position: absolute;
    top: -29px;
    left: -34px;
    width: 57px;
    height: 57px;
    border-radius: 50%;
    background-color: #21c063;
    font-size: 28px;
    font-weight: 600;
    line-height: 58px;
    text-align: center;
    color: #0b1014;
}

/* Composer */
.composer {
    position: relative;
    display: flex;
    align-items: flex-end;
    gap: 24px;
    padding: 7px 26px 14px 24px;
}

.composer-box {
    flex: 1;
    display: flex;
    align-items: center;
    min-width: 0;
    height: 128px;
    padding: 0 36px;
    border-radius: 64px;
    background-color: #1f272a;
    color: #8b9296;
}

.field {
    flex: 1;
    display: flex;
    align-items: center;
    min-width: 0;
    margin: 0 20px 0 38px;
}

.caret {
    width: 6px;
    height: 67px;
    margin-right: -4px;
    background-color: #fafafa;
}

.field input {
    flex: 1;
    min-width: 0;
    padding: 0;
    border: 0;
    outline: 0;
    background: none;
    font-family: inherit;
    font-size: 48px;
    color: #fafafa;
}

.field input::placeholder {
    color: #8b9296;
    opacity: 1;
}

.camera {
    margin-left: 87px;
}

.mic {
    display: flex;
    flex-shrink: 0;
    align-items: center;
    justify-content: center;
    width: 132px;
    height: 132px;
    border-radius: 50%;
    background-color: #fafafa;
    color: #0b1014;
}
```
